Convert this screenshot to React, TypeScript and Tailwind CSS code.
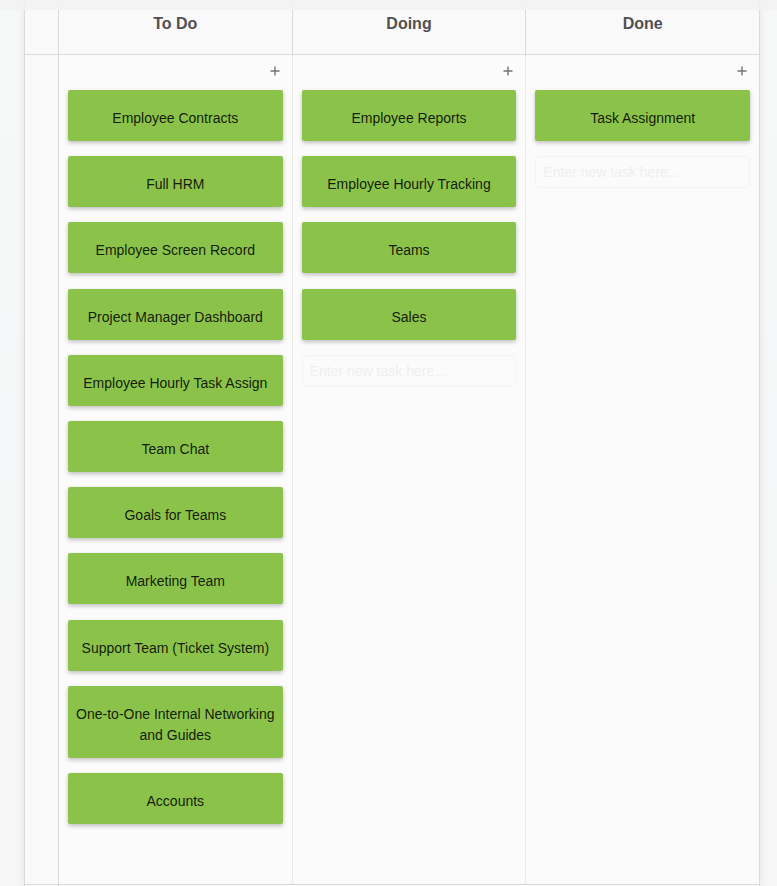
import React from "react";

type Column = { title: string; tasks: string[]; entry: boolean };

const columns: Column[] = [
  {
    title: "To Do",
    entry: false,
    tasks: [
      "Employee Contracts",
      "Full HRM",
      "Employee Screen Record",
      "Project Manager Dashboard",
      "Employee Hourly Task Assign",
      "Team Chat",
      "Goals for Teams",
      "Marketing Team",
      "Support Team (Ticket System)",
      "One-to-One Internal Networking and Guides",
      "Accounts",
    ],
  },
  {
    title: "Doing",
    entry: true,
    tasks: ["Employee Reports", "Employee Hourly Tracking", "Teams", "Sales"],
  },
  { title: "Done", entry: true, tasks: ["Task Assignment"] },
];

function AddButton({ column }: { column: string }) {
  return (
    <button
      type="button"
      aria-label={`Add task to ${column}`}
      className="flex size-4 cursor-pointer items-center justify-center self-end"
    >
      <svg width="10" height="10" viewBox="0 0 10 10" fill="none" aria-hidden="true">
        <path d="M0.5 5H9.5M5 0.5V9.5" stroke="#747474" strokeWidth="1.4" />
      </svg>
    </button>
  );
}

function Card({ title }: { title: string }) {
  return (
    <li className="rounded-[2px] bg-[#8bc34a] px-2 pt-[18px] pb-3 text-center text-sm leading-[21px] text-black/87 shadow-[0_2px_4px_rgba(0,0,0,0.24)]">
      {title}
    </li>
  );
}

function BoardColumn({ column, first }: { column: Column; first: boolean }) {
  return (
    <section
      aria-label={column.title}
      className={`flex flex-col border-l border-[#dadada] px-[9px] pt-2 pb-[34px] ${
        first ? "" : "border-dotted"
      }`}
    >
      <AddButton column={column.title} />
      <ul className="mt-[11px] flex flex-1 flex-col gap-[2%]">
        {column.tasks.map((task) => (
          <Card key={task} title={task} />
        ))}
        {column.entry && (
          <li>
            <input
              type="text"
              aria-label={`New task in ${column.title}`}
              placeholder="Enter new task here..."
              className="block h-8 w-full rounded border border-[#f4f4f4] bg-transparent px-[7px] text-sm text-black/87 placeholder:text-[#efefef]"
            />
          </li>
        )}
      </ul>
    </section>
  );
}

export default function App() {
  return (
    <div className="relative flex min-h-screen bg-linear-to-b from-[#f7f9f9] via-[#f5f6f7] to-[#f6f6f6] pr-[17px] pl-6 font-['Liberation_Sans',Arial,sans-serif]">
      <main className="flex flex-1 flex-col border-x border-[#dadada] bg-[#fbfbfb] shadow-[0_0_8px_rgba(0,0,0,0.08)]">
        <header className="grid grid-cols-[33px_1fr_1fr_1fr] border-b border-[#dadada] bg-[#f9f9f9]">
          <div />
          {columns.map((column) => (
            <h2
              key={column.title}
              className="border-l border-[#dadada] pt-3 pb-[18px] text-center text-base leading-6 font-bold text-[#505050]"
            >
              {column.title}
            </h2>
          ))}
        </header>
        <div className="grid flex-1 grid-cols-[33px_1fr_1fr_1fr] border-b border-[#dadada]">
          <div className="bg-[#f9f9f9]" />
          {columns.map((column, index) => (
            <BoardColumn key={column.title} column={column} first={index === 0} />
          ))}
        </div>
        <div className="grid h-px grid-cols-[33px_1fr]">
          <div />
          <div className="border-l border-[#dadada]" />
        </div>
      </main>
      <div className="absolute inset-x-0 top-0 h-[10px] bg-[#f2f2f2]/90" />
    </div>
  );
}
